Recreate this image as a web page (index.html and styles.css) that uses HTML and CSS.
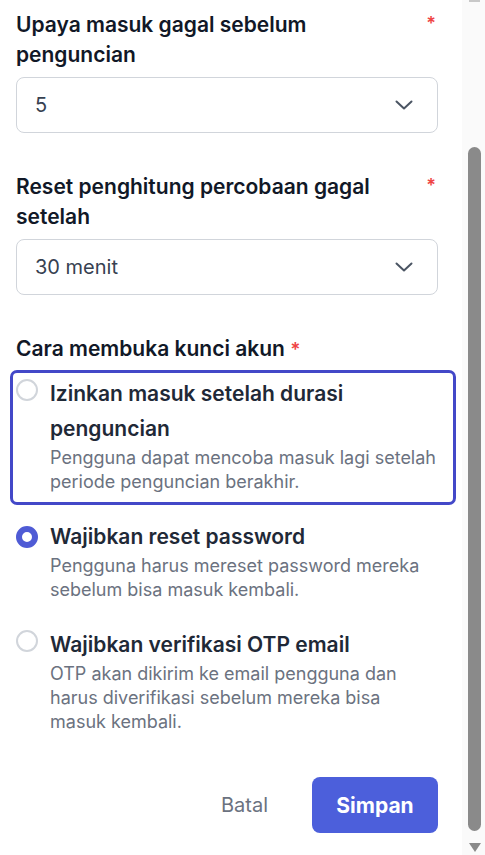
FILE: index.html
```html
<!DOCTYPE html>
<html lang="id">
<head>
<meta charset="utf-8">
<link rel="stylesheet" href="styles.css">
</head>
<body>
<div class="page">
  <main class="panel">
    <div class="field">
      <div class="label-row">
        <span class="label-text">Upaya masuk gagal sebelum penguncian</span>
        <span class="req">*</span>
      </div>
      <div class="select">
        <span>5</span>
        <svg class="chev" width="18" height="10" viewBox="0 0 18 10"><path d="M1.5 1.5 L9 8.5 L16.5 1.5" fill="none" stroke="#4b5563" stroke-width="2" stroke-linecap="round" stroke-linejoin="round"/></svg>
      </div>
    </div>

    <div class="field">
      <div class="label-row">
        <span class="label-text">Reset penghitung percobaan gagal setelah</span>
        <span class="req">*</span>
      </div>
      <div class="select">
        <span>30 menit</span>
        <svg class="chev" width="18" height="10" viewBox="0 0 18 10"><path d="M1.5 1.5 L9 8.5 L16.5 1.5" fill="none" stroke="#4b5563" stroke-width="2" stroke-linecap="round" stroke-linejoin="round"/></svg>
      </div>
    </div>

    <div class="field group">
      <div class="group-label">Cara membuka kunci akun <span class="req-inline">*</span></div>
      <div class="options">
        <div class="option focused">
          <span class="radio"></span>
          <div class="opt-body">
            <div class="opt-title">Izinkan masuk setelah durasi penguncian</div>
            <div class="opt-desc">Pengguna dapat mencoba masuk lagi setelah periode penguncian berakhir.</div>
          </div>
        </div>
        <div class="option">
          <span class="radio checked"></span>
          <div class="opt-body">
            <div class="opt-title">Wajibkan reset password</div>
            <div class="opt-desc">Pengguna harus mereset password mereka sebelum bisa masuk kembali.</div>
          </div>
        </div>
        <div class="option">
          <span class="radio"></span>
          <div class="opt-body">
            <div class="opt-title">Wajibkan verifikasi OTP email</div>
            <div class="opt-desc">OTP akan dikirim ke email pengguna dan harus diverifikasi sebelum mereka bisa masuk kembali.</div>
          </div>
        </div>
      </div>
    </div>

    <div class="actions">
      <button class="btn-cancel">Batal</button>
      <button class="btn-save">Simpan</button>
    </div>
  </main>
  <div class="scrollbar">
    <div class="arrow-up"></div>
    <div class="track">
      <div class="thumb"></div>
    </div>
    <div class="arrow-down"></div>
  </div>
</div>
</body>
</html>
```

FILE: styles.css
```css
* { box-sizing: border-box; }
html, body { margin: 0; padding: 0; background: #ffffff; }
body {
  font-family: Inter, "Noto Sans", "Liberation Sans", sans-serif;
  width: 485px;
  height: 855px;
  overflow: hidden;
}
.page {
  display: flex;
  height: 855px;
}
.panel {
  width: 462px;
  padding: 10px 24px 0 16px;
  display: flex;
  flex-direction: column;
}
.field { display: flex; flex-direction: column; }
.field + .field { margin-top: 39px; }
.label-row {
  display: flex;
  justify-content: space-between;
  align-items: flex-start;
  gap: 20px;
}
.label-text {
  font-size: 21px;
  font-weight: 600;
  line-height: 30px;
  color: #111827;
  max-width: 400px;
}
.req {
  color: #ef4444;
  font-size: 18px;
  font-weight: 600;
  line-height: 28px;
  margin-right: 2px;
}
.req-inline { color: #ef4444; font-size: 19px; }
.select {
  margin-top: 7px;
  height: 56px;
  border: 1px solid #d1d5db;
  border-radius: 8px;
  display: flex;
  align-items: center;
  justify-content: space-between;
  padding: 0 24px 0 18px;
  font-size: 20px;
  color: #374151;
}
.chev { display: block; }
.group-label {
  font-size: 21px;
  font-weight: 600;
  line-height: 30px;
  color: #111827;
}
.options {
  margin-top: 11px;
  display: flex;
  flex-direction: column;
  gap: 25px;
}
.option {
  display: flex;
  gap: 12px;
  align-items: flex-start;
}
.option.focused {
  outline: 3px solid #4348c8;
  outline-offset: 3px;
  border-radius: 1px;
  margin-right: -12px;
  padding-bottom: 5px;
  margin-bottom: -5px;
}
.radio {
  flex: 0 0 22px;
  width: 22px;
  height: 22px;
  border: 2px solid #d1d5db;
  border-radius: 50%;
  margin-top: 3px;
  background: #fff;
}
.radio.checked {
  border: 6px solid #4f5bd5;
  margin-top: 7px;
}
.opt-body { display: flex; flex-direction: column; max-width: 400px; }
.opt-title {
  font-size: 21px;
  font-weight: 600;
  line-height: 35px;
  color: #1f2937;
}
.opt-desc {
  font-size: 18px;
  line-height: 24px;
  color: #6b7280;
}
.actions {
  margin-top: 43px;
  display: flex;
  justify-content: flex-end;
  align-items: center;
  gap: 44px;
}
.btn-cancel {
  font-family: inherit;
  background: none;
  border: none;
  font-size: 20px;
  color: #6b7280;
  padding: 0;
}
.btn-save {
  font-family: inherit;
  width: 126px;
  height: 56px;
  border: none;
  border-radius: 8px;
  background: #4c5fdb;
  color: #ffffff;
  font-size: 21px;
  font-weight: 700;
}
.scrollbar {
  width: 23px;
  background: #fafafa;
  display: flex;
  flex-direction: column;
  align-items: center;
  padding-left: 2px;
}
.arrow-up {
  width: 11px;
  height: 2px;
  background: #c8c8c8;
}
.track {
  flex: 1;
  display: flex;
  flex-direction: column;
  justify-content: flex-end;
  padding-bottom: 12px;
}
.thumb {
  width: 13px;
  height: 684px;
  background: #8a8a8a;
  border-radius: 7px;
}
.arrow-down {
  width: 0;
  height: 0;
  border-left: 6.5px solid transparent;
  border-right: 6.5px solid transparent;
  border-top: 9px solid #8a8a8a;
  margin-bottom: 3px;
}
```
